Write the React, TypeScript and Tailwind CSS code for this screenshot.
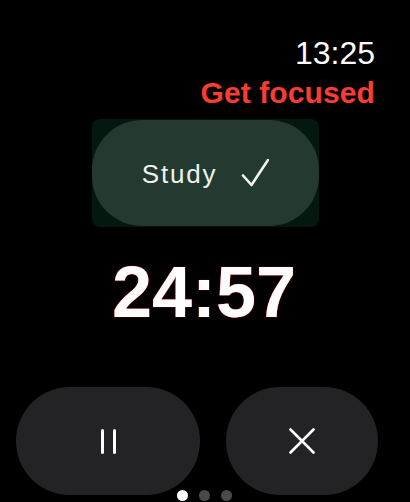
import React from 'react';

export default function App() {
  return (
    <div
      className="relative w-[410px] h-[502px] overflow-hidden bg-black text-white"
      style={{ fontFamily: '"Liberation Sans", Arial, sans-serif' }}
    >
      {/* Header */}
      <div className="flex flex-col items-end pr-[35px] pt-[37px]">
        <span className="text-[32px] leading-[32px]">13:25</span>
        <span className="mt-[9px] text-[30px] leading-[30px] font-bold text-[#fa3c32] tracking-[0.1px]">
          Get focused
        </span>
      </div>

      {/* Activity chip */}
      <div className="mt-[11px] ml-[92px] w-[227px] h-[108px] rounded-[8px] bg-[#03190f] flex items-center">
        <div className="w-full h-[106px] rounded-[50px] bg-[#243a30] flex items-center justify-center gap-[24px]">
          <span className="text-[26px] leading-none tracking-[1.8px] text-[#eef2ef] pt-[2px]">Study</span>
          <svg width="28" height="28" viewBox="0 0 28 28" fill="none">
            <path d="M2 16.5 L10.5 26 L27 1" stroke="#f2f5f3" strokeWidth="2.6" strokeLinecap="round" strokeLinejoin="round" />
          </svg>
        </div>
      </div>

      {/* Countdown */}
      <div className="mt-[29px] flex justify-center pr-[2px]">
        <span className="text-[72px] leading-[72px] font-bold text-white [text-shadow:0_0_1px_#e0000a,0_0_1px_#e0000a]">
          24:57
        </span>
      </div>

      {/* Controls */}
      <div className="mt-[59px] flex gap-[26px] pl-[16px]">
        <button className="w-[184px] h-[108px] rounded-[54px] bg-[#232325] flex items-center justify-center gap-[9px]">
          <span className="w-[3px] h-[25px] rounded-full bg-white" />
          <span className="w-[3px] h-[25px] rounded-full bg-white" />
        </button>
        <button className="w-[152px] h-[108px] rounded-[54px] bg-[#232325] flex items-center justify-center">
          <svg width="26" height="26" viewBox="0 0 26 26" fill="none">
            <path d="M1.5 1.5 L24.5 24.5 M24.5 1.5 L1.5 24.5" stroke="#fff" strokeWidth="2.6" strokeLinecap="round" />
          </svg>
        </button>
      </div>

      {/* Page dots */}
      <div className="absolute left-[177px] top-[490px] flex gap-[11px]">
        <span className="w-[11px] h-[11px] rounded-full bg-white" />
        <span className="w-[11px] h-[11px] rounded-full bg-[#4a4a4a]" />
        <span className="w-[11px] h-[11px] rounded-full bg-[#4a4a4a]" />
      </div>
    </div>
  );
}
